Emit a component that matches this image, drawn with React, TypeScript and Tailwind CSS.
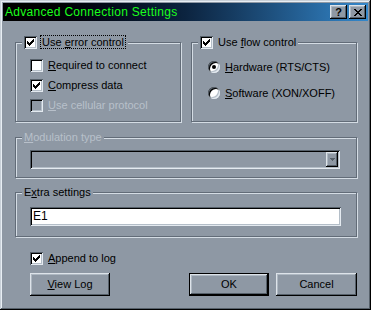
import React from "react";

const BG = "bg-[#8e98a4]";

function Check() {
  return (
    <svg width="7" height="7" viewBox="0 0 7 7" shapeRendering="crispEdges">
      <path d="M0 2H1V3H2V4H3V3H4V2H5V1H6V0H7V3H6V4H5V5H4V6H3V7H2V6H1V5H0Z" fill="#000" />
    </svg>
  );
}

function CloseGlyph() {
  return (
    <svg width="8" height="7" viewBox="0 0 8 7" shapeRendering="crispEdges">
      <path
        d="M0 0H2V1H3V2H5V1H6V0H8V1H7V2H6V3H5V4H6V5H7V6H8V7H6V6H5V5H3V6H2V7H0V6H1V5H2V4H3V3H2V2H1V1H0Z"
        fill="#000"
      />
    </svg>
  );
}

function Checkbox({ checked = false, disabled = false }: { checked?: boolean; disabled?: boolean }) {
  return (
    <div
      className={
        "w-[13px] h-[13px] shrink-0 flex items-center justify-center shadow-[inset_1px_1px_#56606a,inset_-1px_-1px_#e4eaf0,inset_2px_2px_#000,inset_-2px_-2px_#b4bec8] " +
        (disabled ? "bg-[#8e98a4]" : "bg-white")
      }
    >
      {checked && <Check />}
    </div>
  );
}

function Radio({ checked = false }: { checked?: boolean }) {
  return (
    <div className="w-[12px] h-[12px] shrink-0 rounded-full bg-white flex items-center justify-center shadow-[inset_1px_1px_#56606a,inset_-1px_-1px_#e4eaf0,inset_2px_2px_#000,inset_-2px_-2px_#b4bec8]">
      {checked && <div className="w-[4px] h-[4px] rounded-full bg-black" />}
    </div>
  );
}

const raised =
  "shadow-[inset_-1px_-1px_#000,inset_1px_1px_#dde3e9,inset_-2px_-2px_#56606a,inset_2px_2px_#aeb8c2]";
const sunken =
  "shadow-[inset_1px_1px_#56606a,inset_-1px_-1px_#e4eaf0,inset_2px_2px_#000,inset_-2px_-2px_#b4bec8]";
const frame =
  "border border-[#626c78] shadow-[inset_1px_1px_#d4dce4,1px_1px_#d4dce4] px-[6px]";

export default function App() {
  return (
    <div
      className={`w-[371px] h-[310px] ${BG} p-[3px] flex flex-col font-['Liberation_Sans',Arial,sans-serif] text-[11px] leading-[13px] text-black shadow-[inset_-1px_-1px_#000,inset_1px_1px_#c8d0d8,inset_-2px_-2px_#56606a,inset_2px_2px_#e8eef4]`}
    >
      {/* Title bar */}
      <div className="h-[18px] flex items-center bg-linear-to-r from-black via-[#0c2440] to-[#3488cc] pl-[2px] pr-[2px]">
        <span className="text-[12px] tracking-[0.3px] text-[#1cff1c] leading-none">
          Advanced Connection Settings
        </span>
        <div className="ml-auto flex gap-[2px]">
          <div className={`w-[17px] h-[14px] ${BG} ${raised} flex items-center justify-center font-bold text-[11px] leading-none`}>
            ?
          </div>
          <div className={`w-[17px] h-[14px] ${BG} ${raised} flex items-center justify-center`}>
            <CloseGlyph />
          </div>
        </div>
      </div>

      <div className="flex flex-col pl-[12px] pr-[11px]">
        {/* Top groups */}
        <div className="flex gap-[10px] mt-[14px]">
          <fieldset className={`flex-1 h-[87px] ${frame}`}>
            <legend className={`px-[2px] ${BG}`}>
              <div className="h-[14px] flex items-center gap-[3px]">
                <Checkbox checked />
                <span className="h-[14px] px-[1px] border border-dotted border-black flex items-center">
                  <span>
                    Use <u>e</u>rror control
                  </span>
                </span>
              </div>
            </legend>
            <div className="pl-[8px] pt-[10px] flex flex-col gap-[7px]">
              <div className="h-[13px] flex items-center gap-[5px]">
                <Checkbox />
                <span>
                  <u>R</u>equired to connect
                </span>
              </div>
              <div className="h-[13px] flex items-center gap-[5px]">
                <Checkbox checked />
                <span>
                  <u>C</u>ompress data
                </span>
              </div>
              <div className="h-[13px] flex items-center gap-[5px]">
                <Checkbox disabled />
                <span className="text-[#b8c0ca]">
                  <u>U</u>se cellular protocol
                </span>
              </div>
            </div>
          </fieldset>

          <fieldset className={`flex-1 h-[87px] ${frame}`}>
            <legend className={`px-[2px] ${BG}`}>
              <div className="h-[14px] flex items-center gap-[5px]">
                <Checkbox checked />
                <span>
                  Use <u>f</u>low control
                </span>
              </div>
            </legend>
            <div className="pl-[10px] pt-[12px] flex flex-col gap-[14px]">
              <div className="h-[12px] flex items-center gap-[5px]">
                <Radio checked />
                <span>
                  <u>H</u>ardware (RTS/CTS)
                </span>
              </div>
              <div className="h-[12px] flex items-center gap-[5px]">
                <Radio />
                <span>
                  <u>S</u>oftware (XON/XOFF)
                </span>
              </div>
            </div>
          </fieldset>
        </div>

        {/* Modulation type */}
        <fieldset className={`mt-[9px] h-[47px] ${frame}`}>
          <legend className={`px-[2px] ${BG} h-[13px] text-[#b8c0ca]`}>
            <u>M</u>odulation type
          </legend>
          <div className="pl-[8px] pt-[6px]">
            <div className={`w-[310px] h-[19px] ${BG} ${sunken} flex justify-end p-[2px]`}>
              <div className={`w-[12px] h-[15px] ${BG} ${raised} flex items-center justify-center`}>
                <svg width="5" height="3" viewBox="0 0 5 3" shapeRendering="crispEdges">
                  <path d="M0 0H5V1H4V2H3V3H2V2H1V1H0Z" fill="#56606a" />
                </svg>
              </div>
            </div>
          </div>
        </fieldset>

        {/* Extra settings */}
        <fieldset className={`mt-[8px] h-[51px] ${frame}`}>
          <legend className={`px-[2px] ${BG} h-[13px]`}>
            E<u>x</u>tra settings
          </legend>
          <div className="pl-[8px] pt-[8px]">
            <div className={`w-[311px] h-[19px] bg-white ${sunken} flex items-center pl-[3px] text-[12px]`}>
              E1
            </div>
          </div>
        </fieldset>

        {/* Append to log */}
        <div className="mt-[15px] pl-[15px] h-[13px] flex items-center gap-[5px]">
          <Checkbox checked />
          <span>
            <u>A</u>ppend to log
          </span>
        </div>

        {/* Buttons */}
        <div className="mt-[8px] flex">
          <div className={`ml-[15px] w-[80px] h-[23px] ${BG} ${raised} flex items-center justify-center text-[11px]`}>
            <span>
              <u>V</u>iew Log
            </span>
          </div>
          <div className={`ml-auto w-[80px] h-[23px] ${BG} border border-black ${raised} flex items-center justify-center text-[11px]`}>
            OK
          </div>
          <div className={`ml-[7px] w-[81px] h-[23px] ${BG} ${raised} flex items-center justify-center text-[11px]`}>
            Cancel
          </div>
        </div>
      </div>
    </div>
  );
}
